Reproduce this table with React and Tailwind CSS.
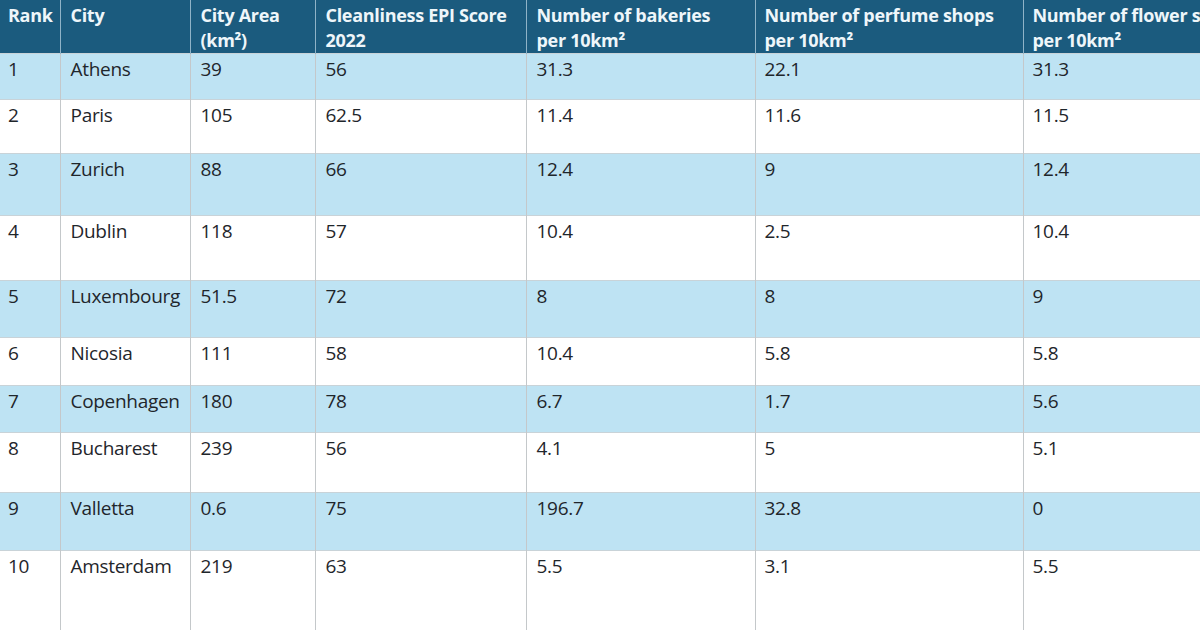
import React from "react";

const rows = [
  ["1", "Athens", "39", "56", "31.3", "22.1", "31.3", 46, true],
  ["2", "Paris", "105", "62.5", "11.4", "11.6", "11.5", 54, false],
  ["3", "Zurich", "88", "66", "12.4", "9", "12.4", 62, true],
  ["4", "Dublin", "118", "57", "10.4", "2.5", "10.4", 65, false],
  ["5", "Luxembourg", "51.5", "72", "8", "8", "9", 57, true],
  ["6", "Nicosia", "111", "58", "10.4", "5.8", "5.8", 48, false],
  ["7", "Copenhagen", "180", "78", "6.7", "1.7", "5.6", 47, true],
  ["8", "Bucharest", "239", "56", "4.1", "5", "5.1", 60, false],
  ["9", "Valletta", "0.6", "75", "196.7", "32.8", "0", 58, true],
  ["10", "Amsterdam", "219", "63", "5.5", "3.1", "5.5", 120, false],
];

const widths = [60, 130, 125, 211, 229, 268, 260];

const th =
  "pr-1 pt-[3px] text-left text-[18px] leading-[25px] font-bold tracking-[-0.3px] whitespace-nowrap";

export default function App() {
  return (
    <div
      className="w-[1200px] h-[630px] overflow-hidden bg-white"
      style={{ fontFamily: '"Open Sans", "Noto Sans", sans-serif' }}
    >
      <table className="table-fixed border-collapse w-[1283px]">
        <colgroup>
          {widths.map((w, i) => (
            <col key={i} style={{ width: w }} />
          ))}
        </colgroup>
        <thead>
          <tr className="h-[53px] bg-[#1b5b7e] text-[#eef6fa] align-top">
            <th className={`border-r border-[#8fb3c7] pl-[8px] ${th}`}>Rank</th>
            <th className={`border-r border-[#8fb3c7] pl-[10px] ${th}`}>City</th>
            <th className={`border-r border-[#8fb3c7] pl-[10px] ${th}`}>
              City Area
              <br />
              (km²)
            </th>
            <th className={`border-r border-[#8fb3c7] pl-[10px] ${th}`}>
              Cleanliness EPI Score
              <br />
              2022
            </th>
            <th className={`border-r border-[#8fb3c7] pl-[10px] ${th}`}>
              Number of bakeries
              <br />
              per 10km²
            </th>
            <th className={`border-r border-[#8fb3c7] pl-[9px] ${th}`}>
              Number of perfume shops
              <br />
              per 10km²
            </th>
            <th className={`pl-[9px] ${th}`}>
              Number of flower shops
              <br />
              per 10km²
            </th>
          </tr>
        </thead>
        <tbody>
          {rows.map((r) => (
            <tr
              key={r[0]}
              className={`align-top text-[19px] leading-[24px] text-[#1f262b] ${
                r[8] ? "bg-[#bee3f3]" : "bg-white"
              }`}
              style={{ height: r[7] }}
            >
              {r.slice(0, 7).map((c, i) => (
                <td
                  key={i}
                  className={`border-t border-[#c9d3d8] ${
                    i < 6 ? "border-r border-r-[#c4c8ca]" : ""
                  } ${i === 0 ? "pl-[8px]" : i >= 5 ? "pl-[9px]" : "pl-[10px]"} pt-[3px] tracking-[-0.3px] whitespace-nowrap`}
                >
                  {c}
                </td>
              ))}
            </tr>
          ))}
        </tbody>
      </table>
    </div>
  );
}
